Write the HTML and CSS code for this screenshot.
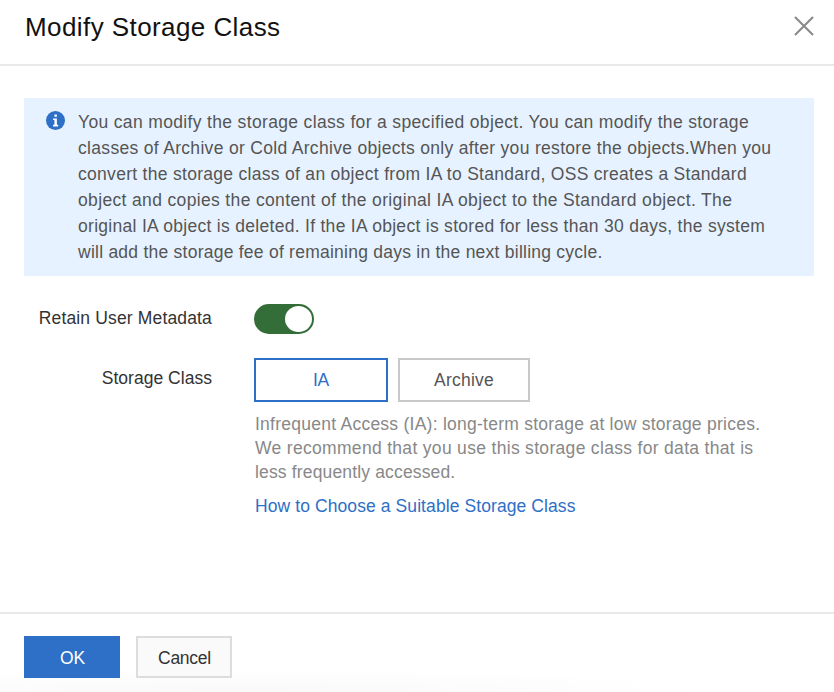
FILE: index.html
```html
<!DOCTYPE html>
<html lang="en">
<head>
<meta charset="utf-8">
<title>Modify Storage Class</title>
<link rel="stylesheet" href="styles.css">
</head>
<body>
<div class="dialog" role="dialog">
  <header class="header">
    <h1 class="title">Modify Storage Class</h1>
    <svg class="close" viewBox="0 0 20 20" width="20" height="20"><path d="M1 1 19 19M19 1 1 19" fill="none" stroke="#8a8a8a" stroke-width="2.1"/></svg>
  </header>
  <main class="body">
    <section class="notice">
      <svg class="info" viewBox="0 0 18 18" width="19" height="19"><circle cx="9" cy="9" r="9" fill="#2e6fc7"/><path d="M8 3.2h2.3v2.2H8zM6.7 7h3.6v6h1.2v1.6H6.7V13H8V8.5H6.7z" fill="#fff"/></svg>
      <p class="notice-text">
        <span class="line n1">You can modify the storage class for a specified object. You can modify the storage</span>
        <span class="line n2">classes of Archive or Cold Archive objects only after you restore the objects.When you</span>
        <span class="line n3">convert the storage class of an object from IA to Standard, OSS creates a Standard</span>
        <span class="line n4">object and copies the content of the original IA object to the Standard object. The</span>
        <span class="line n5">original IA object is deleted. If the IA object is stored for less than 30 days, the system</span>
        <span class="line n6">will add the storage fee of remaining days in the next billing cycle.</span>
      </p>
    </section>
    <div class="row row-switch">
      <span class="label label-meta">Retain User Metadata</span>
      <span class="switch"><span class="knob"></span></span>
    </div>
    <div class="row row-class">
      <span class="label label-class">Storage Class</span>
      <div class="field">
        <div class="options"><button class="option active">IA</button><button class="option">Archive</button></div>
        <p class="help">
          <span class="line h1">Infrequent Access (IA): long-term storage at low storage prices.</span>
          <span class="line h2">We recommend that you use this storage class for data that is</span>
          <span class="line h3">less frequently accessed.</span>
        </p>
        <a class="link">How to Choose a Suitable Storage Class</a>
      </div>
    </div>
  </main>
  <footer class="footer">
    <button class="btn primary">OK</button>
    <button class="btn">Cancel</button>
  </footer>
</div>
</body>
</html>
```

FILE: styles.css
```css
* { box-sizing: border-box; }
body { margin: 0; background: #fff; font: 17.5px/26px "Liberation Sans", Arial, sans-serif; color: #333; }
h1, p { margin: 0; font-weight: 400; white-space: nowrap; }
button { font: inherit; border-radius: 0; padding: 0; }
.dialog { height: 692px; display: flex; flex-direction: column; overflow: hidden; }
.header { height: 66px; flex: none; display: flex; justify-content: space-between; padding: 11px 20px 0 25px; border-bottom: 2px solid #e9e9e9; }
.title { font-size: 26px; line-height: 32px; color: #111; letter-spacing: 0.42px; }
.close { margin-top: 5px; }
.body { flex: 1; padding: 32px 20px 0 24px; }
.notice { height: 178px; display: flex; padding: 11px 0 0 22px; background: #e6f2ff; }
.info { flex: none; margin: 2px 13px 0 0; }
.notice-text { color: #555; }
.line { display: block; }
.n1 { letter-spacing: 0.345px; }
.n2 { letter-spacing: 0.314px; }
.n3 { letter-spacing: 0.293px; }
.n4 { letter-spacing: 0.349px; }
.n5 { letter-spacing: 0.293px; }
.n6 { letter-spacing: 0.243px; }
.row { display: flex; }
.row-switch { margin-top: 28px; }
.row-class { margin-top: 24px; }
.label { width: 188px; margin-right: 42px; text-align: right; white-space: nowrap; }
.label-meta { padding-top: 1px; letter-spacing: 0.15px; }
.label-class { padding-top: 7px; letter-spacing: 0.03px; }
.switch { width: 60px; height: 30px; border-radius: 15px; background: #336e38; padding: 2px; display: flex; justify-content: flex-end; }
.knob { width: 27px; height: 26px; border-radius: 50%; background: #fff; }
.options { display: flex; gap: 10px; }
.option { width: 132px; height: 44px; border: 2px solid #c8c8c8; background: #fff; color: #555; letter-spacing: 0.2px; }
.option.active { width: 134px; border-color: #2e6fc7; color: #2e6fc7; letter-spacing: -0.3px; }
.help { margin: 10px 0 0 1px; line-height: 24px; color: #888; }
.h1 { letter-spacing: 0.25px; }
.h2 { letter-spacing: 0.315px; }
.h3 { letter-spacing: 0.156px; }
.link { display: block; margin: 9px 0 0 1px; color: #2e6fc7; letter-spacing: 0.09px; white-space: nowrap; }
.footer { height: 80px; flex: none; display: flex; gap: 16px; padding: 22px 24px; border-top: 2px solid #e9e9e9; background: radial-gradient(ellipse 480px 24px at 240px 100%, #f9f9f9, #fff); }
.btn { width: 96px; height: 42px; padding: 2px 0 0 1px; border: 2px solid #ddd; background: #fafafa; color: #333; letter-spacing: -0.25px; }
.btn.primary { border-color: #2e6fc7; background: #2e6fc7; color: #fff; }
```
